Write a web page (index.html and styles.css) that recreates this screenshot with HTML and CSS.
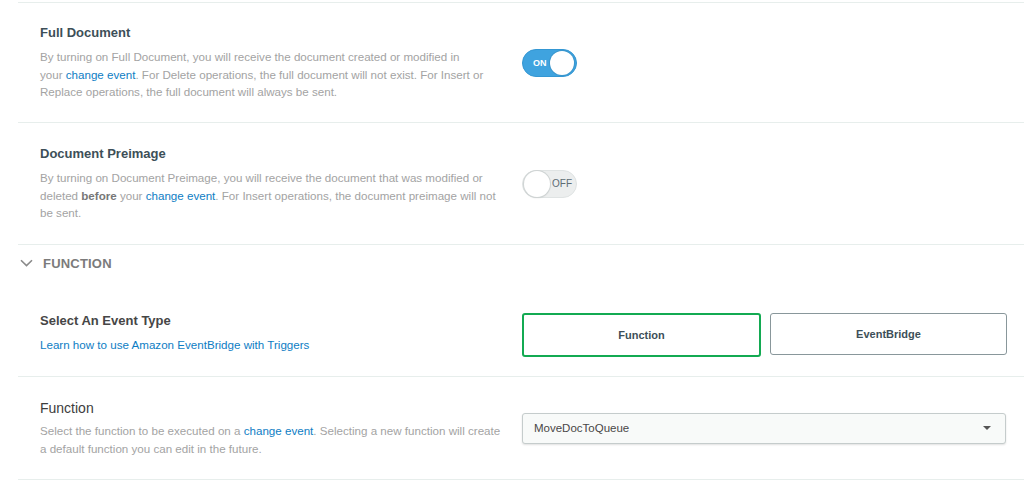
FILE: index.html
```html
<!DOCTYPE html>
<html>
<head>
<meta charset="utf-8">
<link rel="stylesheet" href="styles.css">
</head>
<body>
<div class="page">
  <section class="row row-doc">
    <div class="info">
      <h3 class="title">Full Document</h3>
      <p class="desc narrow">By turning on Full Document, you will receive the document created or modified in your <a class="link">change event</a>. For Delete operations, the full document will not exist. For Insert or Replace operations, the full document will always be sent.</p>
    </div>
    <div class="control">
      <div class="toggle on"><span class="toggle-label">ON</span><span class="knob"></span></div>
    </div>
  </section>

  <section class="row row-pre">
    <div class="info">
      <h3 class="title">Document Preimage</h3>
      <p class="desc">By turning on Document Preimage, you will receive the document that was modified or deleted <b>before</b> your <a class="link">change event</a>. For Insert operations, the document preimage will not be sent.</p>
    </div>
    <div class="control">
      <div class="toggle off"><span class="knob"></span><span class="toggle-label">OFF</span></div>
    </div>
  </section>

  <div class="group-header">
    <svg class="chevron" width="13" height="8" viewBox="0 0 13 8"><path d="M1 1.2 L6.5 6.6 L12 1.2" fill="none" stroke="#8a8a8a" stroke-width="1.6"/></svg>
    <span class="group-title">FUNCTION</span>
  </div>

  <section class="row row-type">
    <div class="info">
      <h3 class="title strong">Select An Event Type</h3>
      <a class="link small-link">Learn how to use Amazon EventBridge with Triggers</a>
    </div>
    <div class="control buttons">
      <button class="choice selected">Function</button>
      <button class="choice">EventBridge</button>
    </div>
  </section>

  <section class="row row-func">
    <div class="info">
      <h3 class="title plain">Function</h3>
      <p class="desc">Select the function to be executed on a <a class="link">change event</a>. Selecting a new function will create a default function you can edit in the future.</p>
    </div>
    <div class="control">
      <div class="select"><span>MoveDocToQueue</span><span class="caret"></span></div>
    </div>
  </section>
</div>
</body>
</html>
```
FILE: styles.css
```css
* { box-sizing: border-box; }
html, body { margin: 0; padding: 0; background: #fff; }
body { font-family: "Liberation Sans", Arial, sans-serif; }
.page { padding-top: 2px; margin-left: 18px; }

.row {
  display: grid;
  grid-template-columns: 482px 484px;
  align-items: center;
  padding-left: 22px;
  border-top: 1px solid #e7eeec;
}
.row-doc { height: 120px; }
.row-pre { height: 122px; }
.row-type { height: 87px; border-top: none; }
.row-func { height: 104px; border-bottom: 1px solid #e7eeec; }

.title {
  margin: 0 0 6px;
  font-size: 13px;
  font-weight: 700;
  color: #3d4f58;
  line-height: 18px;
}
.title.strong { color: #464646; margin-bottom: 7px; }
.title.plain { font-weight: 400; font-size: 14px; color: #3d3d3d; margin-bottom: 5px; }

.desc {
  margin: 0;
  width: 464px;
  font-size: 11.6px;
  line-height: 17.5px;
  color: #a3a3a3;
}
.desc.narrow { width: 444px; }
.desc b { color: #777; }
.link { color: #0d7dc4; text-decoration: none; }
.small-link { font-size: 11.6px; line-height: 16px; display: block; }

.toggle {
  width: 55px;
  height: 28px;
  border-radius: 14px;
  display: flex;
  align-items: center;
  padding: 0 2px;
}
.toggle.on { background: #3fa3df; border: 1px solid #3497d3; justify-content: space-between; padding-left: 10px; }
.toggle.off { background: #eceeee; border: 1px solid #dfe3e3; padding-left: 1px; }
.toggle-label { font-size: 9px; font-weight: 700; color: #fff; }
.toggle.off .toggle-label { font-weight: 400; color: #5d6c74; font-size: 10px; margin-left: 2px; }
.knob {
  width: 24px; height: 24px; border-radius: 50%;
  background: #fff;
  box-shadow: 0 0 0 1px rgba(0,0,0,0.08);
}
.toggle.off .knob { width: 26px; height: 26px; box-shadow: 0 0 0 1px #cfd4d4, 0 1px 2px rgba(0,0,0,0.12); }

.group-header {
  border-top: 1px solid #e7eeec;
  height: 45px;
  display: flex;
  align-items: center;
  padding-left: 2px;
  padding-bottom: 8px;
  gap: 10px;
}
.group-title { font-size: 13px; font-weight: 700; color: #7b7b7b; letter-spacing: 0.2px; }

.buttons { display: flex; gap: 9px; padding-top: 4px; }
.choice {
  flex: 0 0 auto;
  height: 42px;
  background: #fff;
  border: 1px solid #89979b;
  border-radius: 3px;
  font-family: "Liberation Sans", Arial, sans-serif;
  font-size: 11px;
  font-weight: 700;
  color: #3d4f58;
  width: 237px;
}
.choice.selected { border: 2px solid #13aa52; width: 239px; height: 44px; }

.select {
  width: 484px;
  height: 31px;
  background: #f8faf9;
  border: 1px solid #c5cccc;
  border-radius: 3px;
  box-shadow: 0 1px 2px rgba(0,0,0,0.12);
  display: flex;
  align-items: center;
  justify-content: space-between;
  padding: 0 14px 0 11px;
  font-size: 11.5px;
  color: #494747;
}
.caret {
  width: 0; height: 0;
  border-left: 4px solid transparent;
  border-right: 4px solid transparent;
  border-top: 4px solid #555;
}
```
